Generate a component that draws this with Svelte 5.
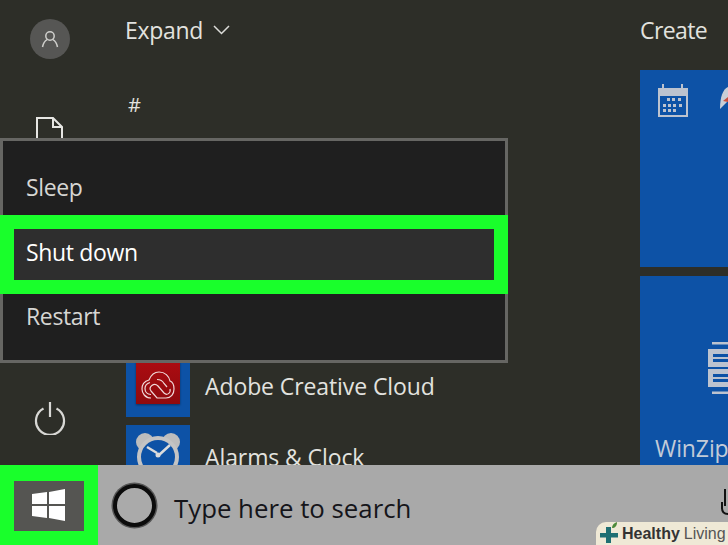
<script>
  const menuItems = [
    { label: 'Sleep', active: false },
    { label: 'Shut down', active: true },
    { label: 'Restart', active: false }
  ];
</script>

<div class="screen">
  <div class="start">
    <div class="rail">
      <div class="avatar">
        <svg width="18" height="18" viewBox="0 0 18 18" fill="none" stroke="#cfcfcc" stroke-width="1.5"><circle cx="9" cy="6" r="4.2"/><path d="M1.5 17c.8-4 3-6.600 4.600-7.400M16.500 17c-.8-4-3-6.600-4.600-7.400"/></svg>
      </div>
      <svg class="doc" width="28" height="40" viewBox="0 0 28 40" fill="none" stroke="#e6e6e3" stroke-width="2"><path d="M1 40V1h16l9 9v30M17 1v9h9"/></svg>
      <svg class="power" width="32" height="34" viewBox="0 0 32 34" fill="none" stroke="#d8d8d5" stroke-width="2.2"><path d="M9.500 7.500a14 14 0 1 0 13 0"/><path d="M16 1v15"/></svg>
    </div>

    <div class="list">
      <div class="expand">Expand
        <svg width="17" height="10" viewBox="0 0 17 10" fill="none" stroke="#dcdcd9" stroke-width="1.5"><path d="M1 1l7.500 7.500L16 1"/></svg>
      </div>
      <div class="hash">#</div>
      <div class="app-row adobe">
        <div class="app-tile">
          <div class="cc">
            <svg width="34" height="28" viewBox="0 0 34 28" fill="none" stroke="#f0d8d8" stroke-width="1.2"><path d="M10 27C4 27 1 22 1 18c0-5 3-8 7-9 2-5 6-8 10-8 6 0 10 4 11 9 3 1 4 4 4 8 0 5-3 9-8 9h-9l-6-7c-3-4 3-9 7-5l6 7c3 3 7 0 6-4"/><path d="M10 23.500c-4 0-6-3-6-6 0-3 2-5 5-6M16 8.500c3 0 6 2 7 4l3 3.500"/></svg>
          </div>
        </div>
        <span>Adobe Creative Cloud</span>
      </div>
      <div class="app-row alarm">
        <div class="app-tile">
          <svg width="46" height="40" viewBox="0 0 46 40"><circle cx="10" cy="10" r="9" fill="#bdbdbd"/><circle cx="36" cy="10" r="9" fill="#bdbdbd"/><circle cx="23" cy="25" r="19" fill="#0d52a6" stroke="#c4c4c4" stroke-width="4"/><path d="M12 15l10 6M24 23l11-10" stroke="#dcdcdc" stroke-width="2.500" fill="none"/><circle cx="23" cy="23" r="2.500" fill="#dcdcdc"/></svg>
        </div>
        <span>Alarms &amp; Clock</span>
      </div>
    </div>

    <div class="tiles">
      <div class="create">Create</div>
      <div class="tile top">
        <svg class="calendar" width="30" height="33" viewBox="0 0 30 33"><path fill="#bcc3cf" fill-rule="evenodd" d="M0 4h4V0h2v4h17V0h2v4h5v29H0zM2 12v19h26V12z"/><g fill="#bcc3cf"><rect x="9" y="14" width="3" height="3"/><rect x="14" y="14" width="3" height="3"/><rect x="20" y="14" width="3" height="3"/><rect x="5" y="20" width="3" height="3"/><rect x="10" y="20" width="3" height="3"/><rect x="15" y="20" width="3" height="3"/><rect x="21" y="20" width="3" height="3"/><rect x="5" y="25" width="3" height="3"/><rect x="10" y="25" width="3" height="3"/><rect x="15" y="25" width="3" height="3"/></g></svg>
        <svg class="feather" width="8" height="22" viewBox="0 0 8 22"><path d="M8 0C3 2 0 10 0 22l8-8z" fill="#c9ced6"/><path d="M8 10L3 14l5 1z" fill="#c9503f"/></svg>
      </div>
      <div class="tile bottom">
        <svg class="zip" width="20" height="52" viewBox="0 0 20 52" fill="none"><path d="M4 1h16M4 51h16" stroke="#bcc3cf" stroke-width="3"/><path fill="#bcc3cf" d="M0 7h20v18H0zM0 27h20v18H0z"/><path fill="#0d52a6" d="M5 12h15v3H5zM5 17h15v3H5zM5 32h15v3H5zM5 37h15v3H5z"/></svg>
        <span class="tile-label">WinZip</span>
      </div>
    </div>

    <div class="popup">
      {#each menuItems as item}
        <div class="item" class:active={item.active}><span>{item.label}</span></div>
      {/each}
    </div>
  </div>

  <div class="taskbar">
    <div class="start-cell">
      <div class="win">
        <svg width="33" height="33" viewBox="0 0 33 33" fill="#fff"><path d="M0 5l15-2v12H0zM17 3l16-3v15H17zM0 17h15v12L0 27zM17 17h16v15l-16-3z"/></svg>
      </div>
    </div>
    <div class="ring"></div>
    <div class="search">Type here to search</div>
    <svg class="mic" width="7" height="30" viewBox="0 0 7 30" fill="none" stroke="#111" stroke-width="2"><path d="M7 26C3 26 1 24 1 20V14M4 18V1"/></svg>
    <div class="badge">
      <svg width="20" height="23" viewBox="0 0 20 23"><path d="M7 5h5v6h7v4.500h-7V21H7v-5.500H1V11h6z" fill="#1f6f73"/><path d="M13 6c0-3 2-5 5-6 0 4-2 6-5 6z" fill="#4d8a3a"/></svg>
      <b>Healthy</b><span>Living</span>
    </div>
  </div>
</div>

<style>
  :global(body) { margin: 0; }
  .screen {
    width: 728px; height: 545px; overflow: hidden;
    display: flex; flex-direction: column;
    background: #2d2e28;
    font-family: "Open Sans", "Noto Sans", sans-serif;
    color: #e2e2df;
  }
  .start { position: relative; height: 465px; display: flex; overflow: hidden; }
  .rail { width: 100px; flex: none; display: flex; flex-direction: column; align-items: center; padding-top: 19px; box-sizing: border-box; }
  .avatar { width: 40px; height: 40px; border-radius: 50%; background: #565654; display: flex; align-items: center; justify-content: center; }
  .doc { margin-top: 58px; margin-right: 1px; flex: none; }
  .power { margin-top: 244px; flex: none; }

  .list { width: 540px; flex: none; box-sizing: border-box; padding-left: 26px; display: flex; flex-direction: column; }
  .expand { margin-top: 14px; margin-left: -1px; font-size: 23px; line-height: 32px; display: flex; align-items: center; gap: 10px; letter-spacing: -.3px; }
  .hash { margin-top: 45px; margin-left: 2px; font-size: 20px; line-height: 28px; }
  .app-row { display: flex; gap: 15px; font-size: 23px; line-height: 33px; letter-spacing: -.1px; flex: none; white-space: nowrap; }
  .adobe { margin-top: 228px; height: 70px; }
  .adobe span { margin-top: 23px; }
  .adobe .app-tile { height: 70px; padding-top: 0; }
  .alarm { margin-top: 8px; height: 40px; }
  .alarm span { margin-top: 16px; }
  .app-tile { width: 64px; height: 64px; flex: none; background: #0d52a6; box-sizing: border-box; display: flex; justify-content: center; padding-top: 7px; }
  .cc { width: 44px; height: 57px; background: linear-gradient(#b50d12, #8f0a0e); box-shadow: 0 1px 2px #0006; display: flex; align-items: flex-end; justify-content: center; padding-bottom: 5px; box-sizing: border-box; }

  .tiles { flex: 1; display: flex; flex-direction: column; }
  .create { height: 70px; box-sizing: border-box; padding-top: 14px; font-size: 23px; line-height: 32px; letter-spacing: -.6px; }
  .tile { background: #0d52a6; position: relative; }
  .top { height: 197px; }
  .bottom { margin-top: 9px; height: 189px; }
  .calendar { position: absolute; left: 18px; top: 14px; }
  .feather { position: absolute; right: 0; top: 17px; }
  .zip { position: absolute; right: 0; top: 66px; }
  .tile-label { position: absolute; left: 15px; top: 156px; font-size: 23px; line-height: 32px; color: #c3cbd8; white-space: nowrap; letter-spacing: -.1px; }

  .popup {
    position: absolute; left: 0; top: 138px; width: 508px; height: 225px;
    box-sizing: border-box; border: 3px solid #666663;
    background: #1f1f1f; padding-top: 14px;
    display: flex; flex-direction: column;
  }
  .item { flex: none; display: flex; align-items: center; padding-left: 23px; font-size: 23px; letter-spacing: -.35px; color: #d6d6d3; box-sizing: border-box; }
  .item:first-child { height: 60px; padding-top: 4px; }
  .item.active {
    margin: 0 -3px; height: 79px; padding-left: 12px; padding-bottom: 5px;
    border: 14px solid #19ff2b; background: #2e2e2e; color: #fff;
  }
  .item:last-child { height: 44px; }

  .taskbar { height: 80px; flex: none; background: #a9a9a9; display: flex; align-items: center; position: relative; color: #111; }
  .start-cell { width: 98px; height: 100%; flex: none; background: #19ff2b; display: flex; align-items: center; justify-content: center; }
  .win { width: 70px; height: 50px; background: #555552; display: flex; align-items: center; justify-content: center; margin-top: 1px; padding-right: 2px; box-sizing: border-box; }
  .ring { width: 35px; height: 35px; margin-left: 15px; flex: none; border-radius: 50%; border: 4px solid #0b0b0b; background: #aaa; box-shadow: 0 0 0 1.500px #555; }
  .search { margin-left: 18px; font-size: 25.800px; margin-top: 6px; color: #15151a; }
  .mic { position: absolute; right: 0; top: 23px; }
  .badge {
    position: absolute; right: 0; bottom: 0; width: 132px; height: 23px;
    background: #efe9d6; border-top-left-radius: 10px;
    display: flex; align-items: center; gap: 4px; padding-left: 3px; box-sizing: border-box;
    font-family: "Liberation Sans", Arial, sans-serif; font-size: 16px; color: #333;
  }
  .badge svg { flex: none; margin-right: -1px; }
  .badge span { color: #555; }
</style>
